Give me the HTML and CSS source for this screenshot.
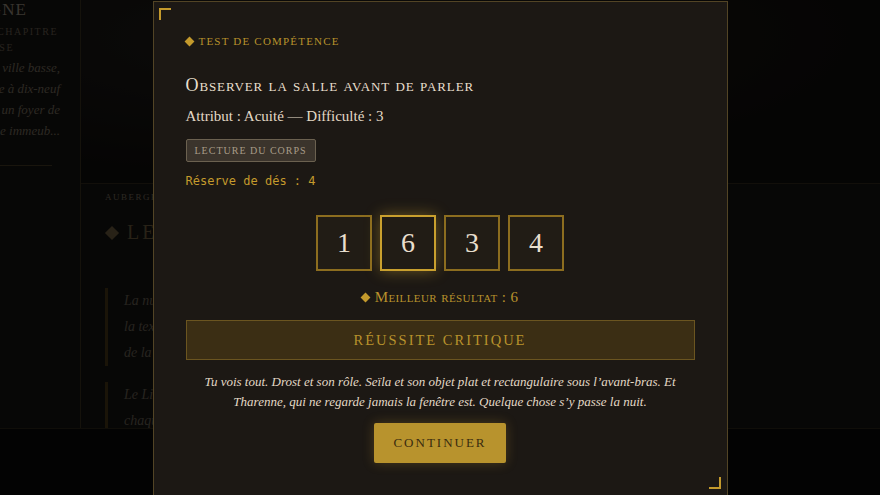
FILE: index.html
```html
<!DOCTYPE html>
<html lang="fr">
<head>
  <meta charset="UTF-8">
  <meta name="viewport" content="width=device-width, initial-scale=1.0">
  <title>Test de compétence</title>
  <link rel="stylesheet" href="styles.css">
</head>
<body>
  <div class="app">
    <aside class="sidebar">
      <div class="line book-title"><span>Le Vieux Cygne</span></div>
      <div class="book-sub">
        <div class="line"><span>Troisième chapitre</span></div>
        <div class="line sub-end"><span>de la braise</span></div>
      </div>
      <div class="book-desc">
        <div class="line"><span>Un soir de pluie dans la ville basse,</span></div>
        <div class="line"><span>une auberge qui ouvre à dix-neuf</span></div>
        <div class="line"><span>heures et ferme sur un foyer de</span></div>
        <div class="line"><span>cendres, au pied d'une immeub...</span></div>
      </div>
      <hr class="book-rule">
    </aside>

    <main class="main">
      <div class="hero"></div>
      <section class="scene">
        <div class="scene-place">Auberge du Vieux Cygne</div>
        <h2 class="scene-title"><span class="diamond"></span>Le Lieu</h2>
        <blockquote class="scene-quote">La nuit tombe sur la salle commune, la fumée et la texture des tables usées par les coudes, le fond de la pièce reste dans l'ombre.</blockquote>
        <blockquote class="scene-quote">Le Lieu se remplit lentement. L'entrée grince à chaque client.</blockquote>
      </section>
    </main>

    <footer class="bottom-bar"></footer>
  </div>

  <div class="overlay">
    <div class="modal">
      <span class="corner corner-tl"></span>
      <span class="corner corner-br"></span>

      <div class="modal-kicker"><span class="diamond small"></span>Test de compétence</div>

      <h1 class="modal-title">Observer la salle avant de parler</h1>
      <div class="modal-attr">Attribut : Acuité — Difficulté : 3</div>

      <span class="tag">Lecture du corps</span>

      <div class="pool">Réserve de dés : 4</div>

      <div class="dice">
        <div class="die">1</div>
        <div class="die best">6</div>
        <div class="die">3</div>
        <div class="die">4</div>
      </div>

      <div class="best-line"><span class="diamond small"></span>Meilleur résultat : 6</div>

      <div class="result">Réussite critique</div>

      <p class="narration">Tu vois tout. Drost et son rôle. Seïla et son objet plat et rectangulaire sous l’avant-bras. Et Tharenne, qui ne regarde jamais la fenêtre est. Quelque chose s’y passe la nuit.</p>

      <div class="actions">
        <button class="btn-continue">Continuer</button>
      </div>
    </div>
  </div>
</body>
</html>
```

FILE: styles.css
```css
* {
  margin: 0;
  padding: 0;
  box-sizing: border-box;
}

body {
  background: #141210;
  color: #e3d9c6;
  font-family: 'Liberation Serif', serif;
  height: 495px;
  overflow: hidden;
}

/* page behind the dialog */
.app {
  display: grid;
  grid-template-columns: 81px 1fr;
  grid-template-rows: 428px 1fr;
  height: 100vh;
}

.sidebar {
  border-right: 1px solid #4e4128;
  background: #1c1916;
  overflow: hidden;
}

/* the sidebar is scrolled sideways: each line overflows to the left */
.line {
  display: flex;
  justify-content: flex-end;
  width: 60px;
}

.line span {
  flex: none;
  white-space: nowrap;
}

.book-title {
  width: 27px;
  font-size: 17px;
  letter-spacing: 1px;
  text-transform: uppercase;
  color: #c9bca8;
}

.book-sub {
  margin-top: 4px;
  font-size: 10px;
  letter-spacing: 1.5px;
  line-height: 16px;
  text-transform: uppercase;
  color: #8a7e6c;
}

.book-sub .line {
  width: 58px;
}

.book-sub .sub-end {
  width: 14px;
}

.book-desc {
  margin-top: 1px;
  font-size: 13px;
  line-height: 21px;
  font-style: italic;
  color: #9e927f;
}

.book-rule {
  border: none;
  border-top: 1px solid #5a4c30;
  width: 52px;
  margin-top: 24px;
}

.main {
  display: flex;
  flex-direction: column;
  overflow: hidden;
}

.hero {
  height: 184px;
  flex: none;
  background: radial-gradient(ellipse at 30% 20%, #2c2824, #141210 70%);
  border-bottom: 1px solid #433824;
}

.scene {
  flex: 1;
  padding: 8px 0 0 24px;
  background: #1c1916;
  overflow: hidden;
}

.scene-place {
  font-size: 9px;
  letter-spacing: 1.5px;
  text-transform: uppercase;
  color: #9d917e;
}

.scene-title {
  display: flex;
  align-items: center;
  gap: 10px;
  margin-top: 19px;
  padding-left: 2px;
  font-weight: normal;
  font-size: 20px;
  letter-spacing: 3px;
  text-transform: uppercase;
  color: #8f7b52;
}

.scene-quote {
  margin-top: 44px;
  padding-left: 16px;
  border-left: 3px solid #5e4a1e;
  width: 300px;
  font-size: 14px;
  line-height: 26px;
  font-style: italic;
  color: #8a8070;
}

.scene-quote + .scene-quote {
  margin-top: 16px;
}

.bottom-bar {
  grid-column: 1 / 3;
  background: #0d0c0b;
  border-top: 1px solid #3c3220;
}

.diamond {
  display: inline-block;
  width: 10px;
  height: 10px;
  background: #8f7b52;
  transform: rotate(45deg);
}

.diamond.small {
  width: 7px;
  height: 7px;
  background: #c49a2c;
  margin-right: 6px;
}

/* dialog */
.overlay {
  position: fixed;
  inset: 0;
  background: rgba(0, 0, 0, 0.72);
  display: flex;
  justify-content: center;
  padding-top: 1px;
}

.modal {
  position: relative;
  width: 575px;
  height: 520px;
  background: #1c1814;
  border: 1px solid #524425;
  padding: 33px 32px;
}

.corner {
  position: absolute;
  width: 12px;
  height: 12px;
  border-color: #c49a2c;
  border-style: solid;
  border-width: 0;
}

.corner-tl {
  top: 6px;
  left: 5px;
  border-top-width: 2px;
  border-left-width: 2px;
}

.corner-br {
  top: 475px;
  right: 6px;
  border-bottom-width: 2px;
  border-right-width: 2px;
}

.modal-kicker {
  display: flex;
  align-items: center;
  font-size: 11px;
  letter-spacing: 1.2px;
  text-transform: uppercase;
  color: #b8922c;
}

.modal-title {
  margin-top: 28px;
  font-weight: normal;
  font-size: 18px;
  font-variant: small-caps;
  letter-spacing: 0.9px;
  color: #e8dfcd;
}

.modal-attr {
  margin-top: 12px;
  font-size: 15px;
  color: #e3d9c6;
}

.tag {
  display: inline-block;
  margin-top: 14px;
  padding: 5px 8px;
  border: 1px solid #6b6150;
  border-radius: 2px;
  background: #3b342c;
  font-size: 10px;
  letter-spacing: 1px;
  text-transform: uppercase;
  color: #a89c88;
}

.pool {
  margin-top: 12px;
  font-family: 'DejaVu Sans Mono', monospace;
  font-size: 12px;
  color: #c49a2c;
}

.dice {
  display: flex;
  justify-content: center;
  gap: 8px;
  margin-top: 27px;
}

.die {
  width: 56px;
  height: 56px;
  border: 2px solid #8c6d1f;
  background: #211c15;
  display: flex;
  align-items: center;
  justify-content: center;
  font-size: 28px;
  color: #e8dfcd;
}

.die.best {
  border-color: #c9a02e;
  box-shadow: 0 0 14px rgba(201, 160, 46, 0.45);
}

.best-line {
  display: flex;
  align-items: center;
  justify-content: center;
  margin-top: 18px;
  font-size: 15px;
  font-variant: small-caps;
  letter-spacing: 0.4px;
  color: #b8922c;
}

.result {
  margin-top: 14px;
  height: 40px;
  display: flex;
  align-items: center;
  justify-content: center;
  background: #3b2e14;
  border: 1px solid #6b5520;
  font-size: 14.5px;
  letter-spacing: 2px;
  text-transform: uppercase;
  color: #b8922c;
}

.narration {
  margin-top: 12px;
  padding: 0 14px;
  text-align: center;
  font-size: 13px;
  line-height: 20px;
  font-style: italic;
  color: #e3d9c6;
}

.actions {
  display: flex;
  justify-content: center;
  margin-top: 11px;
}

.btn-continue {
  width: 132px;
  height: 40px;
  border: none;
  border-radius: 2px;
  background: #b8932d;
  box-shadow: 0 0 12px rgba(184, 147, 45, 0.3);
  font-family: 'Liberation Serif', serif;
  font-size: 13px;
  letter-spacing: 2px;
  text-transform: uppercase;
  color: #3a2c0f;
  cursor: pointer;
}
```
